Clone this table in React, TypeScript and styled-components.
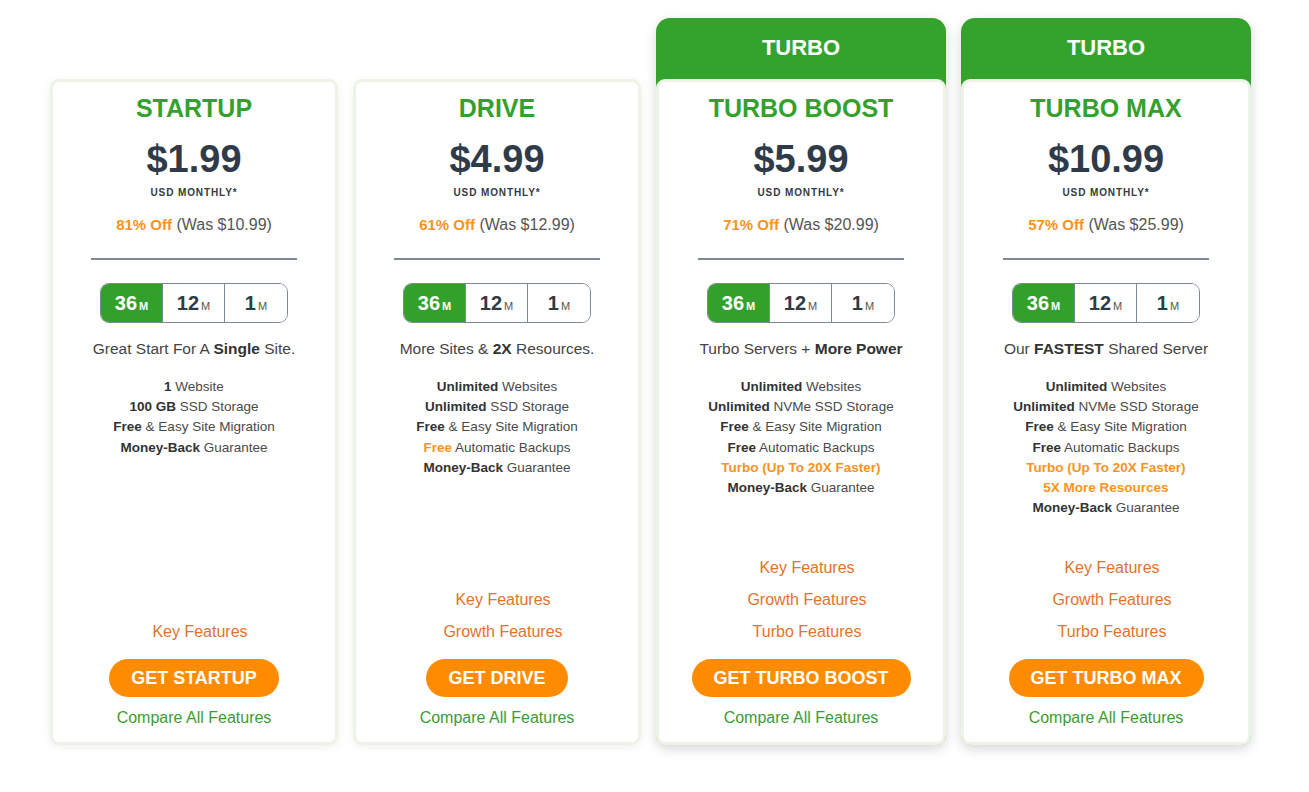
import React from "react";
import styled, { createGlobalStyle } from "styled-components";

const Global = createGlobalStyle`
  html, body { margin: 0; padding: 0; background: #ffffff; }
  body { font-family: "Liberation Sans", Arial, sans-serif; }
`;

const Page = styled.div`
  display: flex;
  align-items: flex-end;
  gap: 15px;
  padding: 18px 0 47px 50px;
  height: 792px;
  box-sizing: border-box;
`;

const TurboWrap = styled.div`
  width: 290px;
  display: flex;
  flex-direction: column;
  background: #33a32b;
  border-radius: 14px 14px 10px 10px;
  box-shadow: 0 4px 12px rgba(0, 0, 0, 0.16);
`;

const TurboLabel = styled.div`
  height: 61px;
  box-sizing: border-box;
  padding-bottom: 1px;
  display: flex;
  align-items: center;
  justify-content: center;
  color: #ffffff;
  font-weight: 700;
  font-size: 22px;
`;

const Card = styled.div<{ $turbo?: boolean }>`
  width: ${(p) => (p.$turbo ? "290px" : "288px")};
  height: 666px;
  box-sizing: border-box;
  background: #ffffff;
  border: 3px solid #edf3e7;
  border-radius: 9px;
  box-shadow: ${(p) => (p.$turbo ? "none" : "0 2px 8px rgba(120, 140, 110, 0.12)")};
  display: flex;
  flex-direction: column;
  align-items: center;
  text-align: center;
  padding: 12px 0 14px;
`;

const Title = styled.div`
  color: #35a12d;
  font-weight: 700;
  font-size: 25px;
  line-height: 28px;
`;

const Price = styled.div`
  color: #2f3b49;
  font-weight: 700;
  font-size: 38px;
  line-height: 44px;
  margin-top: 15px;
`;

const Period = styled.div`
  color: #333b45;
  font-weight: 700;
  font-size: 10px;
  letter-spacing: 0.9px;
  margin-top: 6px;
`;

const Discount = styled.div`
  color: #555555;
  font-size: 16px;
  margin-top: 17px;
  line-height: 20px;
`;

const Off = styled.span`
  color: #f7941d;
  font-weight: 700;
  font-size: 15px;
`;

const Divider = styled.div`
  width: 206px;
  height: 2px;
  background: #7c8a98;
  margin-top: 23px;
`;

const Toggle = styled.div`
  display: flex;
  margin-top: 23px;
  border: 1px solid #7d8996;
  border-radius: 9px;
  overflow: hidden;
  height: 40px;
  box-sizing: border-box;
`;

const Seg = styled.div<{ $active?: boolean; $last?: boolean }>`
  width: 62px;
  display: flex;
  align-items: baseline;
  justify-content: center;
  padding-top: 8px;
  box-sizing: border-box;
  background: ${(p) => (p.$active ? "#33a02c" : "#ffffff")};
  color: ${(p) => (p.$active ? "#ffffff" : "#2f3b49")};
  border-right: ${(p) => (p.$last ? "none" : "1px solid #7d8996")};
  font-weight: 700;
  font-size: 20px;
`;

const Unit = styled.span<{ $active?: boolean }>`
  font-size: 11px;
  font-weight: ${(p) => (p.$active ? 700 : 400)};
  color: ${(p) => (p.$active ? "#ffffff" : "#555555")};
  margin-left: 2px;
`;

const Tagline = styled.div`
  color: #444444;
  font-size: 15.5px;
  margin-top: 16px;
  line-height: 20px;
`;

const Features = styled.div`
  margin-top: 18px;
  display: flex;
  flex-direction: column;
  font-size: 13.5px;
  line-height: 20.2px;
  color: #4a4a4a;
`;

const B = styled.b<{ $orange?: boolean }>`
  color: ${(p) => (p.$orange ? "#f7941d" : "#333333")};
`;

const Links = styled.div`
  margin-top: auto;
  display: flex;
  flex-direction: column;
  align-items: center;
  gap: 12px;
  padding-left: 12px;
`;

const Link = styled.a`
  color: #e6722a;
  font-size: 16px;
  line-height: 20px;
  text-decoration: none;
`;

const Button = styled.button`
  margin-top: 17px;
  height: 38px;
  border: none;
  border-radius: 19px;
  background: #ff8c00;
  color: #ffffff;
  font-family: "Liberation Sans", Arial, sans-serif;
  font-weight: 700;
  font-size: 18px;
  padding: 0 22px;
  cursor: pointer;
`;

const Compare = styled.a`
  margin-top: 11px;
  color: #3d9c35;
  font-size: 16px;
  line-height: 20px;
  text-decoration: none;
`;

type Feat = { b?: string; t?: string; orange?: boolean; full?: string };

type Plan = {
  name: string;
  price: string;
  off: string;
  was: string;
  tagline: React.ReactNode;
  features: Feat[];
  links: string[];
  button: string;
  turbo?: boolean;
};

const plans: Plan[] = [
  {
    name: "STARTUP",
    price: "$1.99",
    off: "81% Off",
    was: "$10.99",
    tagline: (
      <>
        Great Start For A <B>Single</B> Site.
      </>
    ),
    features: [
      { b: "1", t: " Website" },
      { b: "100 GB", t: " SSD Storage" },
      { b: "Free", t: " & Easy Site Migration" },
      { b: "Money-Back", t: " Guarantee" },
    ],
    links: ["Key Features"],
    button: "GET STARTUP",
  },
  {
    name: "DRIVE",
    price: "$4.99",
    off: "61% Off",
    was: "$12.99",
    tagline: (
      <>
        More Sites &amp; <B>2X</B> Resources.
      </>
    ),
    features: [
      { b: "Unlimited", t: " Websites" },
      { b: "Unlimited", t: " SSD Storage" },
      { b: "Free", t: " & Easy Site Migration" },
      { b: "Free", t: " Automatic Backups", orange: true },
      { b: "Money-Back", t: " Guarantee" },
    ],
    links: ["Key Features", "Growth Features"],
    button: "GET DRIVE",
  },
  {
    name: "TURBO BOOST",
    price: "$5.99",
    off: "71% Off",
    was: "$20.99",
    tagline: (
      <>
        Turbo Servers + <B>More Power</B>
      </>
    ),
    features: [
      { b: "Unlimited", t: " Websites" },
      { b: "Unlimited", t: " NVMe SSD Storage" },
      { b: "Free", t: " & Easy Site Migration" },
      { b: "Free", t: " Automatic Backups" },
      { full: "Turbo (Up To 20X Faster)" },
      { b: "Money-Back", t: " Guarantee" },
    ],
    links: ["Key Features", "Growth Features", "Turbo Features"],
    button: "GET TURBO BOOST",
    turbo: true,
  },
  {
    name: "TURBO MAX",
    price: "$10.99",
    off: "57% Off",
    was: "$25.99",
    tagline: (
      <>
        Our <B>FASTEST</B> Shared Server
      </>
    ),
    features: [
      { b: "Unlimited", t: " Websites" },
      { b: "Unlimited", t: " NVMe SSD Storage" },
      { b: "Free", t: " & Easy Site Migration" },
      { b: "Free", t: " Automatic Backups" },
      { full: "Turbo (Up To 20X Faster)" },
      { full: "5X More Resources" },
      { b: "Money-Back", t: " Guarantee" },
    ],
    links: ["Key Features", "Growth Features", "Turbo Features"],
    button: "GET TURBO MAX",
    turbo: true,
  },
];

const PlanCard: React.FC<{ plan: Plan }> = ({ plan }) => (
  <Card $turbo={plan.turbo}>
    <Title>{plan.name}</Title>
    <Price>{plan.price}</Price>
    <Period>USD MONTHLY*</Period>
    <Discount>
      <Off>{plan.off}</Off> (Was {plan.was})
    </Discount>
    <Divider />
    <Toggle>
      <Seg $active>
        36<Unit $active>M</Unit>
      </Seg>
      <Seg>
        12<Unit>M</Unit>
      </Seg>
      <Seg $last>
        1<Unit>M</Unit>
      </Seg>
    </Toggle>
    <Tagline>{plan.tagline}</Tagline>
    <Features>
      {plan.features.map((f, i) =>
        f.full ? (
          <div key={i}>
            <B $orange>{f.full}</B>
          </div>
        ) : (
          <div key={i}>
            <B $orange={f.orange}>{f.b}</B>
            {f.t}
          </div>
        )
      )}
    </Features>
    <Links>
      {plan.links.map((l) => (
        <Link key={l} href="#">
          {l}
        </Link>
      ))}
    </Links>
    <Button>{plan.button}</Button>
    <Compare href="#">Compare All Features</Compare>
  </Card>
);

export default function App() {
  return (
    <>
      <Global />
      <Page>
        {plans.map((p) =>
          p.turbo ? (
            <TurboWrap key={p.name}>
              <TurboLabel>TURBO</TurboLabel>
              <PlanCard plan={p} />
            </TurboWrap>
          ) : (
            <PlanCard key={p.name} plan={p} />
          )
        )}
      </Page>
    </>
  );
}
